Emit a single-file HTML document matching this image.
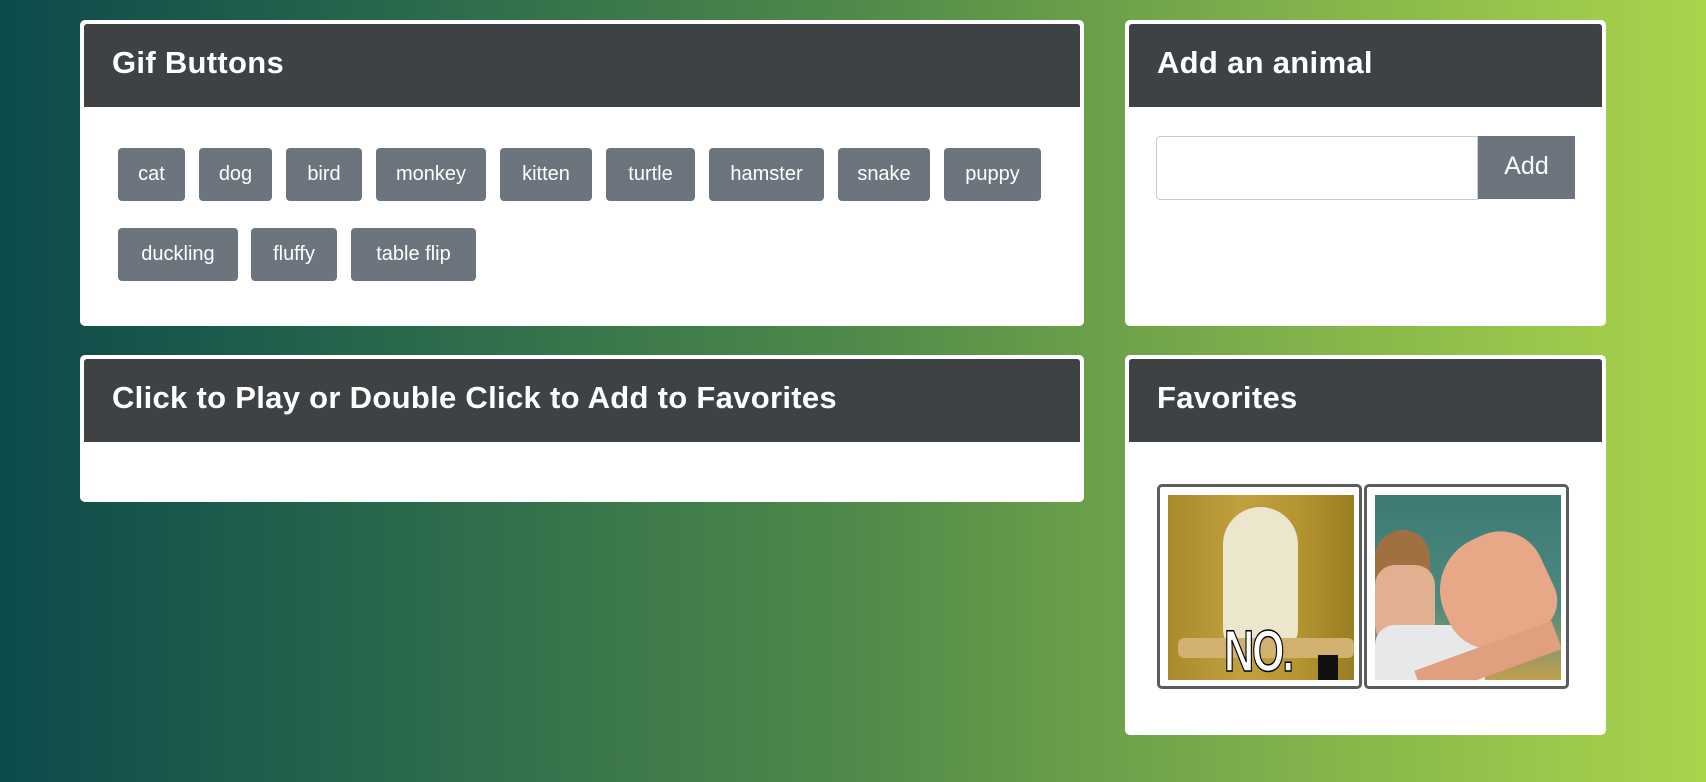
<!DOCTYPE html>
<html><head><meta charset="utf-8"><style>
*{box-sizing:border-box;margin:0;padding:0}
body{width:1706px;height:782px;overflow:hidden;background:linear-gradient(90deg,#0d4a4c 0%,#2c6a4c 25%,#4f8a4a 50%,#80b04b 75%,#aad44b 100%);font-family:"Liberation Sans",sans-serif;position:relative}
.card{position:absolute;background:#fff;border-radius:5px}
.hd{position:absolute;left:4px;right:4px;top:4px;height:83px;background:#3e4244;border-radius:3px 3px 0 0;color:#fff;font-size:31px;font-weight:bold;padding-left:28px;line-height:78px;letter-spacing:0.3px}
.b{position:absolute;background:#6c757d;color:#fff;font-size:20px;border-radius:4px;text-align:center;line-height:52px;height:53px}
.fr{position:absolute;border:3px solid #5a5c5e;border-radius:5px;background:#fff}
.im{position:absolute;left:8px;top:8px;width:186px;height:185px;overflow:hidden}
</style></head><body>
<div class="card" style="left:80px;top:20px;width:1004px;height:306px">
<div class="hd">Gif Buttons</div>
<div class="b" style="left:38px;top:128px;width:67px">cat</div>
<div class="b" style="left:119px;top:128px;width:73px">dog</div>
<div class="b" style="left:206px;top:128px;width:76px">bird</div>
<div class="b" style="left:296px;top:128px;width:110px">monkey</div>
<div class="b" style="left:420px;top:128px;width:92px">kitten</div>
<div class="b" style="left:526px;top:128px;width:89px">turtle</div>
<div class="b" style="left:629px;top:128px;width:115px">hamster</div>
<div class="b" style="left:758px;top:128px;width:92px">snake</div>
<div class="b" style="left:864px;top:128px;width:97px">puppy</div>
<div class="b" style="left:38px;top:208px;width:120px">duckling</div>
<div class="b" style="left:171px;top:208px;width:86px">fluffy</div>
<div class="b" style="left:271px;top:208px;width:125px">table flip</div>
</div>
<div class="card" style="left:1125px;top:20px;width:481px;height:306px">
<div class="hd">Add an animal</div>
<div style="position:absolute;left:31px;top:116px;width:322px;height:64px;border:1px solid #ccc;border-radius:4px 0 0 4px"></div>
<div style="position:absolute;left:353px;top:116px;width:97px;height:63px;background:#6c757d;color:#fff;font-size:25px;line-height:60px;text-align:center">Add</div>
</div>
<div class="card" style="left:80px;top:355px;width:1004px;height:147px">
<div class="hd">Click to Play or Double Click to Add to Favorites</div>
</div>
<div class="card" style="left:1125px;top:355px;width:481px;height:380px">
<div class="hd">Favorites</div>
</div>
<div class="fr" style="left:1157px;top:484px;width:205px;height:205px">
<div class="im" style="background:linear-gradient(90deg,#a88a2a,#c2a040 40%,#b59530 70%,#9a7d22)">
<div style="position:absolute;left:55px;top:12px;width:75px;height:150px;background:#ece6cc;border-radius:40px 40px 30px 30px"></div>
<div style="position:absolute;left:10px;top:143px;width:176px;height:20px;background:#d2b070;border-radius:6px"></div>
<div style="position:absolute;left:150px;top:160px;width:20px;height:25px;background:#111"></div>
<div style="position:absolute;left:56px;top:128px;font:bold 58px/1 'Liberation Sans',sans-serif;color:#fff;transform:scaleX(.72);transform-origin:left;-webkit-text-stroke:1.5px #000;letter-spacing:-3px">NO.</div>
</div></div>
<div class="fr" style="left:1364px;top:484px;width:205px;height:205px">
<div class="im" style="background:linear-gradient(180deg,#3c7a74,#4d8a80 60%,#c0a050)">
<div style="position:absolute;left:0;top:35px;width:55px;height:70px;background:#a07040;border-radius:30px"></div>
<div style="position:absolute;left:0;top:70px;width:60px;height:80px;background:#e0b090;border-radius:20px"></div>
<div style="position:absolute;left:0;top:130px;width:110px;height:60px;background:#e6e8ea;border-radius:20px 30px 0 0"></div>
<div style="position:absolute;left:65px;top:40px;width:110px;height:110px;background:#e8a888;border-radius:50% 40% 30% 40%;transform:rotate(-25deg)"></div>
<div style="position:absolute;left:40px;top:150px;width:146px;height:30px;background:#e0a080;transform:rotate(-20deg)"></div>
</div></div>
</body></html>
